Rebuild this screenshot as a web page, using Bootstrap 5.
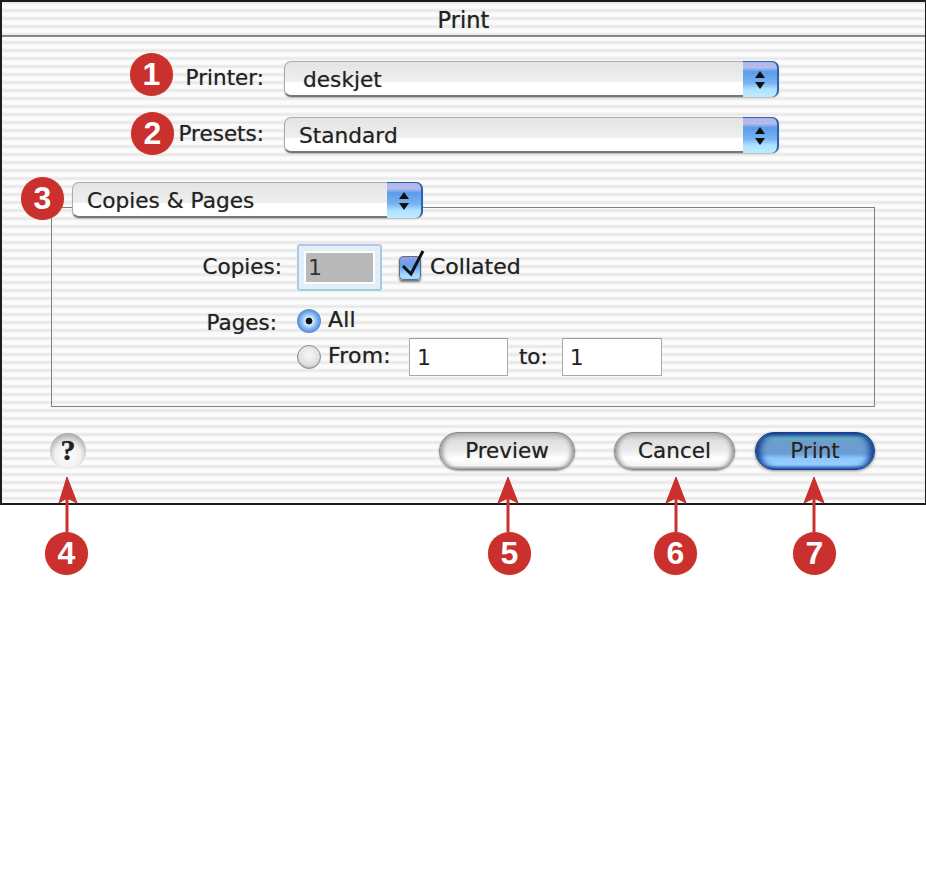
<!DOCTYPE html>
<html lang="en">
<head>
    <meta charset="UTF-8">
    <meta name="viewport" content="width=device-width, initial-scale=1.0">
    <title>Print</title>
    <link rel="stylesheet" href="https://cdn.jsdelivr.net/npm/bootstrap@5.3.0/dist/css/bootstrap.min.css">
    <style>
        body { background: #fff; font-family: "DejaVu Sans", "Liberation Sans", sans-serif; color: #222; }
        .page { position: relative; width: 926px; height: 885px; overflow: hidden; }
        .print-win {
            height: 505px; border: 2px solid #1c1c1c; border-right-width: 1px; border-bottom-width: 2px;
            background: repeating-linear-gradient(180deg, #e8e8e8 0, #e8e8e8 1px, #f3f3f3 2px, #fbfbfb 3px, #fbfbfb 6px, #f3f3f3 7px, #e8e8e8 8px);
            font-size: 21.5px; line-height: 1;
        }
        .win-title { height: 35px; border-bottom: 2px solid #888; font-size: 22.5px; padding-top: 7px; text-align: center; }
        .field-label { text-shadow: 0 0 1px #888; white-space: nowrap; }

        .top-rows { padding-top: 24px; }
        .top-row { height: 36px; margin-bottom: 20px; }
        .top-label { width: 262px; text-align: right; margin-right: 20px; padding-bottom: 2px; }
        .popup {
            position: relative; height: 36px; padding: 3px 0 0 18px; border: 1px solid #aaa; border-bottom: 2px solid #777;
            border-radius: 7px; background: linear-gradient(180deg, #e4e4e4 0, #efefef 60%, #fff 62%, #fff 100%);
            box-shadow: 0 1px 1px #bbb; font-size: 21.7px; text-shadow: 0 0 1px #999;
        }
        .popup-wide { width: 495px; }
        .popup-group { width: 351px; margin: 29px 0 0 70px; z-index: 1; padding-left: 14px; }
        .popup-cap {
            position: absolute; top: -1px; right: -1px; bottom: -2px; width: 36px; border-radius: 0 7px 7px 0;
            border-right: 2px solid #2d62ad; border-top: 1px solid #2d62ad;
            background: linear-gradient(180deg, #b4b4ec 0, #b4bcee 16%, #5b9cea 28%, #78b2f2 60%, #aee2ff 78%, #bcecff 100%);
        }
        .std-text { padding-left: 14px; }

        .group-box { margin: -11px 0 0 49px; width: 824px; height: 200px; border: 1px solid #808080; padding-top: 37px; }
        .copies-row { height: 44px; }
        .copies-label { width: 230px; text-align: right; }
        .copies-box {
            width: 85px; height: 47px; margin-left: 15px; padding: 5px; border: 2px solid; border-color: #b5c5ea #a8c8e8 #9fd0dc; border-radius: 3px;
            background: #e3eff8; flex: none;
        }
        .copies-box input { display: block; width: 100%; height: 100%; border: 2px solid #fff; background: #b9b9b9; padding: 0 0 0 2px; font-size: 22px; color: #333; outline: 0; }
        .check-box {
            width: 22px; height: 24px; margin: 1px 0 0 17px; border: 1px solid #5e6f86; border-radius: 4px; position: relative;
            background: linear-gradient(180deg, #9a9ce8 0, #5f9fea 40%, #a6dcff 85%); box-shadow: 0 2px 2px #777;
        }
        .check-box svg { position: absolute; left: -1px; top: -8px; }
        .collated-text { margin-left: 9px; font-size: 22px; }

        .pages-row { margin-top: 13px; height: 36px; }
        .pages-label { width: 225px; text-align: right; padding-top: 10px; }
        .radio-col { margin-left: 20px; }
        .radio-all, .radio-from { width: 24px; height: 24px; border-radius: 50%; flex: none; }
        .radio-all { background: radial-gradient(circle at 50% 50%, #111 0, #111 18%, #d8ecff 22%, #6ca7ea 55%, #2c5ea5 100%); }
        .radio-from { background: radial-gradient(circle at 50% 40%, #f8f8f8 0, #e0e0e0 60%, #8a8a8a 100%); border: 1px solid #888; }
        .all-row { height: 24px; margin-top: 7px; }
        .from-row { height: 38px; margin-top: 5px; }
        .opt-text { margin-left: 7px; font-size: 22px; letter-spacing: .2px; padding-bottom: 2px; }
        .num-field {
            height: 38px; border: 1px solid #aaa; border-top-color: #999; background: #fff; padding: 0 0 0 7px;
            font-size: 22px; color: #222; outline: 0; border-radius: 0;
        }
        .num-from { width: 99px; margin-left: 18px; }
        .num-to { width: 100px; margin-left: 14px; }
        .to-text { margin-left: 11px; font-size: 21.5px; }

        .win-foot { height: 38px; margin-top: 25px; }
        .help-btn {
            width: 36px; height: 36px; margin-left: 48px; padding: 0 0 3px; border: 0; border-radius: 50%; font-family: "Liberation Serif", serif; font-weight: 700; font-size: 30px; line-height: 30px; color: #222; text-shadow: 0 0 1px #555;
            background: radial-gradient(circle at 50% 62%, #fff 0, #f0f0f0 45%, #999 85%, #777 100%);
        }
        .pill-btn {
            height: 38px; padding: 0; border: 1px solid #888; border-radius: 19px; font-size: 21.5px; color: #222; text-shadow: 0 0 1px #888;
            background: linear-gradient(180deg, #b5b5b5 0, #dedede 20%, #ececec 50%, #fff 70%, #f4f4f4 90%, #a5a5a5 100%);
            box-shadow: 0 1px 2px #999, inset 5px 0 5px -3px #888, inset -5px 0 5px -3px #888;
        }
        .btn-preview { width: 136px; margin-left: 353px; }
        .btn-cancel { width: 121px; margin-left: 39px; }
        .btn-print {
            width: 120px; margin-left: 20px; border-color: #173f8d;
            background: linear-gradient(180deg, #1d3f9a 0, #5fa9c2 14%, #6d9cce 30%, #6a9ed4 58%, #8cc6ff 70%, #9acfff 88%, #2a62b8 100%);
            box-shadow: 0 1px 3px #888, inset 7px 0 6px -3px #0f3a8f, inset -7px 0 6px -3px #0f3a8f;
        }

        .arrow-layer { position: absolute; left: 0; top: 0; pointer-events: none; }
        .pin {
            position: absolute; width: 43px; height: 43px; border-radius: 50%; background: #c9302e; color: #fff;
            font-family: "Liberation Sans", sans-serif; font-weight: 700; font-size: 32px; line-height: 43px; text-align: center;
            box-shadow: 0 0 1px #e9a060; z-index: 2;
        }
        .pin-1 { left: 130px; top: 53px; }
        .pin-2 { left: 131px; top: 112px; }
        .pin-3 { left: 21px; top: 177px; }
        .pin-4 { left: 45px; top: 532px; }
        .pin-5 { left: 488px; top: 532px; }
        .pin-6 { left: 654px; top: 532px; }
        .pin-7 { left: 793px; top: 532px; }
    </style>
</head>
<body>
    <div class="page">
        <div class="print-win">
            <div class="win-title field-label">Print</div>

            <div class="top-rows">
                <div class="top-row d-flex align-items-center">
                    <div class="top-label field-label">Printer:</div>
                    <div class="popup popup-wide d-flex align-items-center">deskjet
                        <span class="popup-cap d-flex align-items-center justify-content-center">
                            <svg width="12" height="20" viewBox="0 0 12 20"><path d="M6 1 11 8H1ZM1 12H11L6 19Z" fill="#111"/></svg>
                        </span>
                    </div>
                </div>
                <div class="top-row d-flex align-items-center">
                    <div class="top-label field-label">Presets:</div>
                    <div class="popup popup-wide std-text d-flex align-items-center">Standard
                        <span class="popup-cap d-flex align-items-center justify-content-center">
                            <svg width="12" height="20" viewBox="0 0 12 20"><path d="M6 1 11 8H1ZM1 12H11L6 19Z" fill="#111"/></svg>
                        </span>
                    </div>
                </div>
            </div>

            <div class="popup popup-group d-flex align-items-center">Copies &amp; Pages
                <span class="popup-cap d-flex align-items-center justify-content-center">
                    <svg width="12" height="20" viewBox="0 0 12 20"><path d="M6 1 11 8H1ZM1 12H11L6 19Z" fill="#111"/></svg>
                </span>
            </div>

            <div class="group-box">
                <div class="copies-row d-flex align-items-center">
                    <div class="copies-label field-label">Copies:</div>
                    <div class="copies-box"><input type="text" value="1" aria-label="Copies"></div>
                    <div class="check-box">
                        <svg width="26" height="32" viewBox="0 0 26 32"><path d="M4 17 12 25 24 2" fill="none" stroke="#111" stroke-width="3"/></svg>
                    </div>
                    <div class="collated-text field-label">Collated</div>
                </div>
                <div class="pages-row d-flex">
                    <div class="pages-label field-label">Pages:</div>
                    <div class="radio-col">
                        <div class="all-row d-flex align-items-center">
                            <span class="radio-all"></span>
                            <span class="opt-text field-label">All</span>
                        </div>
                        <div class="from-row d-flex align-items-center">
                            <span class="radio-from"></span>
                            <span class="opt-text field-label">From:</span>
                            <input class="num-field num-from" type="text" value="1" aria-label="From">
                            <span class="to-text field-label">to:</span>
                            <input class="num-field num-to" type="text" value="1" aria-label="To">
                        </div>
                    </div>
                </div>
            </div>

            <div class="win-foot d-flex align-items-center">
                <button class="btn help-btn" type="button">?</button>
                <button class="btn pill-btn btn-preview" type="button">Preview</button>
                <button class="btn pill-btn btn-cancel" type="button">Cancel</button>
                <button class="btn pill-btn btn-print" type="button">Print</button>
            </div>
        </div>

        <!-- callout arrows -->
        <svg class="arrow-layer" width="926" height="600" viewBox="0 0 926 600">
            <g fill="#c9302e" stroke="#c9302e">
                <path d="M67 477 77 503 67 498 59 503Z"/><path d="M67 498V535" stroke-width="3"/>
                <path d="M508 477 518 503 508 498 498 503Z"/><path d="M508 498V535" stroke-width="3"/>
                <path d="M676 477 686 503 676 498 666 503Z"/><path d="M676 498V535" stroke-width="3"/>
                <path d="M814 477 824 503 814 498 804 503Z"/><path d="M814 498V535" stroke-width="3"/>
            </g>
        </svg>
        <div class="pin pin-1">1</div>
        <div class="pin pin-2">2</div>
        <div class="pin pin-3">3</div>
        <div class="pin pin-4">4</div>
        <div class="pin pin-5">5</div>
        <div class="pin pin-6">6</div>
        <div class="pin pin-7">7</div>
    </div>
    <script src="https://cdn.jsdelivr.net/npm/bootstrap@5.3.0/dist/js/bootstrap.bundle.min.js"></script>
</body>
</html>
